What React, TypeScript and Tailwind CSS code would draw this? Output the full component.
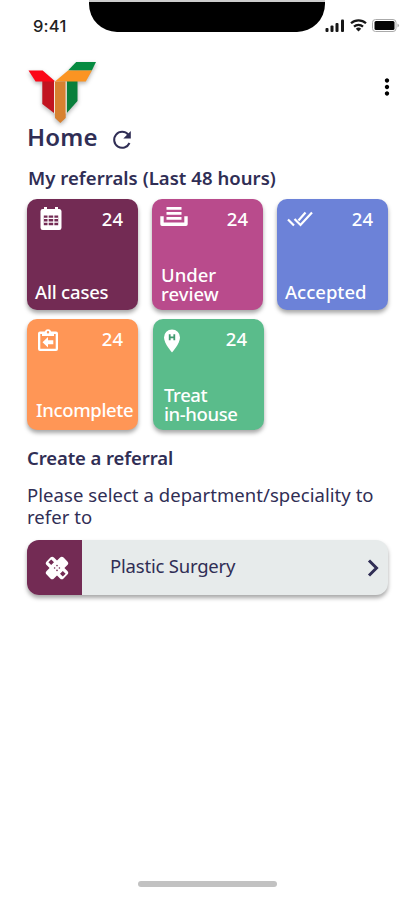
import type { ReactNode } from 'react';
import { MdMoreVert } from 'react-icons/md';

type Tile = {
  label: string;
  count: number;
  color: string;
  labelClass: string;
  countClass: string;
  iconClass: string;
  icon: ReactNode;
};

const CalendarIcon = () => (
  <svg width="22" height="24" viewBox="0 0 22 24" fill="white">
    <path
      fillRule="evenodd"
      d="M4 0h3v2h8V0h3v2h1.5A2.2 2.2 0 0 1 21.500 4.200v16.600A2.200 2.200 0 0 1 19.300 23H2.700A2.200 2.200 0 0 1 .5 20.800V4.200A2.200 2.200 0 0 1 2.700 2H4zM3.800 8.500v9.700h14.400V8.500z"
    />
    <path d="M4 10.800h14v1.200H4zM4 14.600h14v1.200H4zM7.500 8h1.200v11H7.500zM13.200 8h1.200v11h-1.200z" />
  </svg>
);

const TrayIcon = () => (
  <svg width="28" height="21" viewBox="0 0 28 21" fill="white">
    <path d="M6.500 0h15v2.700h-15zM6.500 5h15v2.700h-15zM6.500 10h15v2.700h-15z" />
    <path d="M2 9.300v8h24v-8" fill="none" stroke="white" strokeWidth="3.400" strokeLinejoin="round" />
  </svg>
);

const DoubleCheckIcon = () => (
  <svg width="26" height="17" viewBox="0 0 26 17" fill="none" stroke="white" strokeWidth="2.200">
    <path d="M1 8.500l6 6M7.500 8l6 6L25 1.500M11.500 9.500l7-8" />
  </svg>
);

const ReturnIcon = () => (
  <svg width="22" height="23" viewBox="0 0 22 23" fill="white">
    <path
      fillRule="evenodd"
      d="M3 2.500h4.800a3.400 3.400 0 0 1 6.400 0H19a2 2 0 0 1 2 2V20a2 2 0 0 1-2 2H3a2 2 0 0 1-2-2V4.500a2 2 0 0 1 2-2zM3.300 5v14.700h15.400V5H17v2H5V5zM11 2a1.200 1.200 0 1 0 0 2.400A1.200 1.200 0 0 0 11 2z"
    />
    <path d="M5.500 13.200L11 8v3.300h5.300v4H11v3.200z" />
  </svg>
);

const PinIcon = () => (
  <svg width="18" height="24" viewBox="0 0 18 24">
    <path d="M9 .5A8 8 0 0 0 1 8.500C1 14.500 9 23.500 9 23.500s8-9 8-15A8 8 0 0 0 9 .5z" fill="white" />
    <path d="M6.700 5.300v6M11.300 5.300v6M6.700 8.300h4.600" stroke="#429b70" strokeWidth="1.800" />
  </svg>
);

const HealingIcon = () => (
  <svg width="24" height="24" viewBox="0 0 24 24">
    <g fill="white">
      <rect x="0" y="6.800" width="24" height="10.400" rx="2.500" transform="rotate(45 12 12)" />
      <rect x="0" y="6.800" width="24" height="10.400" rx="2.500" transform="rotate(-45 12 12)" />
    </g>
    <g fill="#732b54">
      <path d="M6.200 3.400L9 6.200 6.200 9 3.400 6.200zM17.800 15l2.800 2.800-2.800 2.800-2.800-2.800z" />
      <circle cx="12" cy="9.600" r="0.800" />
      <circle cx="9.600" cy="12" r="0.800" />
      <circle cx="14.400" cy="12" r="0.800" />
      <circle cx="12" cy="14.400" r="0.800" />
    </g>
  </svg>
);

const Logo = () => (
  <svg width="70" height="65" viewBox="0 0 70 65" className="drop-shadow-[0_2px_2px_rgba(0,0,0,0.3)]">
    <path d="M14.300 19h11.700v32L14.300 42z" fill="#c11420" />
    <path d="M0.500 8.500h14.200L27.300 19.500H7.600z" fill="#fb0718" />
    <path d="M38.800 19h10.700v20L38.800 51z" fill="#087f3b" />
    <path d="M48.200 0H68l-4.200 8.500H40z" fill="#058b40" />
    <path d="M40 8.500h24l-6.200 11H27z" fill="#fb9422" />
    <path d="M27 19.500h10.700v36.500l-5.400 5-5.300-5z" fill="#d78130" />
    <path d="M26.500 19.500v32M38.200 19.500v32" stroke="#f7e6d9" strokeWidth="1" />
  </svg>
);

const tiles: Tile[] = [
  {
    label: 'All cases',
    count: 24,
    color: 'bg-[#732b54]',
    labelClass: 'left-2 bottom-[9px] tracking-[-0.2px]',
    countClass: 'right-[15px]',
    iconClass: 'left-[13px] top-2',
    icon: <CalendarIcon />,
  },
  {
    label: 'Under\nreview',
    count: 24,
    color: 'bg-[#b94b8c]',
    labelClass: 'left-[9px] bottom-[7px]',
    countClass: 'right-[15px]',
    iconClass: 'left-2 top-2',
    icon: <TrayIcon />,
  },
  {
    label: 'Accepted',
    count: 24,
    color: 'bg-[#6c82d8]',
    labelClass: 'left-2 bottom-[9px]',
    countClass: 'right-[15px]',
    iconClass: 'left-2.5 top-3',
    icon: <DoubleCheckIcon />,
  },
  {
    label: 'Incomplete',
    count: 24,
    color: 'bg-[#ff9656]',
    labelClass: 'left-[9px] bottom-[11px] tracking-[-0.35px]',
    countClass: 'right-[15px]',
    iconClass: 'left-2.5 top-2.5',
    icon: <ReturnIcon />,
  },
  {
    label: 'Treat\nin-house',
    count: 24,
    color: 'bg-[#5abc8b]',
    labelClass: 'left-[11px] bottom-[7px] tracking-[-0.4px]',
    countClass: 'right-[17px]',
    iconClass: 'left-2.5 top-2.5',
    icon: <PinIcon />,
  },
];

const ReferralTile = ({ label, count, color, labelClass, countClass, iconClass, icon }: Tile) => (
  <button className={`relative h-[111px] w-[111px] rounded-[10px] text-left text-white shadow-[0_3px_4px_rgba(0,0,0,0.35)] ${color}`}>
    <span className={`absolute ${iconClass}`}>{icon}</span>
    <span className={`absolute top-2 text-[18.5px] font-medium leading-6 ${countClass}`}>{count}</span>
    <span className={`absolute whitespace-pre text-[18.5px] font-medium leading-[19px] ${labelClass}`}>{label}</span>
  </button>
);

const StatusBar = () => (
  <header className="flex h-[52px] items-start">
    <span className="ml-[33px] mt-[15px] w-[56px] font-['Inter'] text-[16.5px] font-medium leading-[22px] tracking-[0.2px] text-[#222]">9:41</span>
    <div className="h-[32px] w-[238px] rounded-b-[28px] border-t-2 border-[#ccc] bg-black" />
    <div className="ml-auto mr-[15px] mt-[19px] flex items-center gap-[5px]">
      <svg width="20" height="13" viewBox="0 0 20 13" fill="#161616">
        <rect x="0.500" y="9" width="3" height="4" rx="1" />
        <rect x="5.500" y="6.500" width="3" height="6.500" rx="1" />
        <rect x="10.500" y="4" width="3" height="9" rx="1" />
        <rect x="16" y="0.500" width="3" height="12.500" rx="1" />
      </svg>
      <svg width="17" height="13" viewBox="0 0 17 13" fill="none" stroke="#161616" strokeWidth="2.200">
        <path d="M1 4.300a11 11 0 0 1 15 0M4 7.600a6.500 6.500 0 0 1 9 0" />
        <path d="M8.500 12.500L5.800 9.800a3.800 3.800 0 0 1 5.400 0z" fill="#161616" stroke="none" />
      </svg>
      <svg width="28" height="13" viewBox="0 0 28 13">
        <rect x="0.500" y="0.500" width="23.500" height="12" rx="3" fill="none" stroke="#aaa" />
        <rect x="2.500" y="2" width="20" height="9" rx="1.500" fill="#050505" />
        <path d="M25.500 4.500q3 2 0 4z" fill="#aaa" />
      </svg>
    </div>
  </header>
);

const App = () => {
  return (
    <main className="flex h-[900px] w-[415px] flex-col overflow-hidden bg-white font-['Noto_Sans',sans-serif] text-[#302e55]">
      <StatusBar />

      <div className="flex h-[73px] items-start justify-between pl-[28px] pr-[15px] pt-[10px]">
        <Logo />
        <MdMoreVert size={26} className="mt-3 text-black" />
      </div>

      <div className="flex h-[36px] items-start pl-[27px]">
        <h1 className="w-[85px] text-[24px] font-semibold leading-[24px] tracking-[0.2px]">Home</h1>
        <svg width="20" height="20" viewBox="0 0 20 20" fill="none" stroke="#302e55" strokeWidth="2" className="mt-[5px]">
          <path d="M16.200 4.500A8 8 0 1 0 17.500 13" />
          <path d="M18.800 1v7.500h-7.500z" fill="#302e55" stroke="none" />
        </svg>
      </div>

      <section className="pl-[27px]">
        <h2 className="h-[38px] whitespace-nowrap pl-px text-[18.5px] font-semibold leading-[33px] tracking-[0.05px]">My referrals (Last 48 hours)</h2>
        <div className="flex flex-col gap-[9px]">
          <div className="flex gap-[14px]">
            {tiles.slice(0, 3).map((tile) => (
              <ReferralTile key={tile.label} {...tile} />
            ))}
          </div>
          <div className="flex gap-[15px]">
            {tiles.slice(3).map((tile) => (
              <ReferralTile key={tile.label} {...tile} />
            ))}
          </div>
        </div>
      </section>

      <section className="pl-[27px] pt-[16px]">
        <h2 className="text-[18.5px] font-semibold leading-[24px] tracking-[-0.1px]">Create a referral</h2>
        <p className="mt-[14px] whitespace-nowrap text-[18.5px] leading-[22px] tracking-[0.05px]">
          Please select a department/speciality to
          <br />
          refer to
        </p>
        <button className="mt-[12px] flex h-[55px] w-[361px] items-center overflow-hidden rounded-[12px] bg-[#e7ebeb] text-left shadow-[0_3px_4px_rgba(0,0,0,0.35)]">
          <span className="flex h-full w-[55px] items-center justify-center bg-[#732b54] pl-1">
            <HealingIcon />
          </span>
          <span className="flex-1 pb-[3px] pl-[28px] text-[18.5px] leading-6 tracking-[-0.2px]">Plastic Surgery</span>
          <svg width="12" height="18" viewBox="0 0 12 18" fill="none" stroke="#302e55" strokeWidth="3" className="mr-[9px]">
            <path d="M2 1.500L9.500 9 2 16.500" />
          </svg>
        </button>
      </section>

      <div className="mb-[13px] ml-[138px] mt-auto h-[6px] w-[139px] rounded-full bg-[#c2c2c2]" />
    </main>
  );
};

export default App;
